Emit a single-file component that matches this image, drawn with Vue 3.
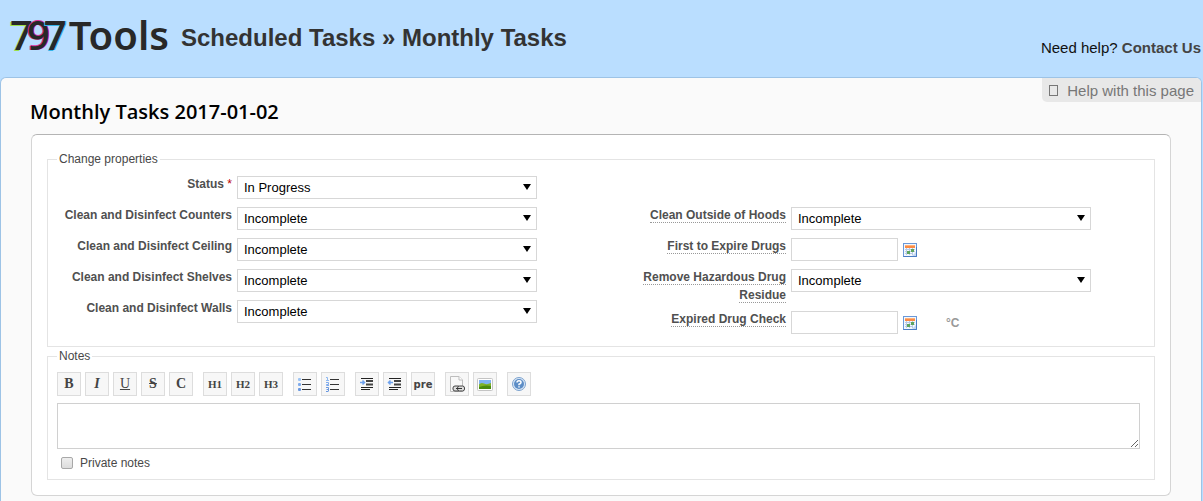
<script setup>
import { ref } from 'vue'

const choices = ['Incomplete', 'Complete', 'Not Applicable']

const status = ref('In Progress')
const leftFields = ref([
  { id: 'counters', label: 'Clean and Disinfect Counters', value: 'Incomplete' },
  { id: 'ceiling', label: 'Clean and Disinfect Ceiling', value: 'Incomplete' },
  { id: 'shelves', label: 'Clean and Disinfect Shelves', value: 'Incomplete' },
  { id: 'walls', label: 'Clean and Disinfect Walls', value: 'Incomplete' },
])
const rightFields = ref([
  { id: 'hoods', type: 'list', label: 'Clean Outside of Hoods', value: 'Incomplete' },
  { id: 'expire', type: 'date', label: 'First to Expire Drugs', value: '' },
  { id: 'residue', type: 'list', label: 'Remove Hazardous Drug Residue', value: 'Incomplete' },
  { id: 'check', type: 'date', label: 'Expired Drug Check', value: '', unit: '°C' },
])
const notes = ref('')
const isPrivate = ref(false)

const toolbar = [
  [
    { name: 'Strong', text: 'B', cls: 'strong' },
    { name: 'Italic', text: 'I', cls: 'italic' },
    { name: 'Underline', text: 'U', cls: 'underline' },
    { name: 'Deleted', text: 'S', cls: 'deleted' },
    { name: 'Inline code', text: 'C', cls: 'strong' },
  ],
  [
    { name: 'Heading 1', text: 'H1', cls: 'heading' },
    { name: 'Heading 2', text: 'H2', cls: 'heading' },
    { name: 'Heading 3', text: 'H3', cls: 'heading' },
  ],
  [
    { name: 'Unordered list', icon: 'ul' },
    { name: 'Ordered list', icon: 'ol' },
  ],
  [
    { name: 'Quote', icon: 'indent' },
    { name: 'Remove quote', icon: 'outdent' },
    { name: 'Preformatted text', text: 'pre', cls: 'pre' },
  ],
  [
    { name: 'Link to a page', icon: 'link' },
    { name: 'Image', icon: 'image' },
  ],
  [{ name: 'Text formatting help', icon: 'help' }],
]
</script>

<template>
  <div class="page">
    <header class="header">
      <div class="logo">
        <span class="digit green">7</span><span class="digit pink">9</span><span class="digit cyan">7</span>
        <span class="word">Tools</span>
      </div>
      <h1>Scheduled Tasks » Monthly Tasks</h1>
      <p class="contact">Need help? <a href="#contact">Contact Us</a></p>
    </header>

    <main class="main">
      <a class="page-help" href="#help">
        <svg width="9" height="11" aria-hidden="true"><rect x="0.5" y="0.5" width="8" height="10" fill="none" stroke="#777" /></svg>
        Help with this page
      </a>
      <h2>Monthly Tasks 2017-01-02</h2>

      <form class="card" @submit.prevent>
        <fieldset class="properties">
          <legend>Change properties</legend>
          <div class="columns">
            <div class="row">
              <label for="status">Status <span class="required">*</span></label>
              <div class="field">
                <span class="select">
                  <select id="status" v-model="status">
                    <option>New</option>
                    <option>In Progress</option>
                    <option>Closed</option>
                  </select>
                </span>
              </div>
            </div>
          </div>
          <div class="columns">
            <div class="column">
              <div v-for="f in leftFields" :key="f.id" class="row">
                <label :for="f.id">{{ f.label }}</label>
                <div class="field">
                  <span class="select">
                    <select :id="f.id" v-model="f.value">
                      <option v-for="c in choices" :key="c">{{ c }}</option>
                    </select>
                  </span>
                </div>
              </div>
            </div>
            <div class="column">
              <div v-for="f in rightFields" :key="f.id" class="row">
                <label :for="f.id"><span class="hint">{{ f.label }}</span></label>
                <div class="field">
                  <span v-if="f.type === 'list'" class="select">
                    <select :id="f.id" v-model="f.value">
                      <option v-for="c in choices" :key="c">{{ c }}</option>
                    </select>
                  </span>
                  <template v-else>
                    <input :id="f.id" v-model="f.value" class="date" type="text" />
                    <button class="calendar" type="button" :aria-label="'Pick date: ' + f.label">
                      <svg width="14" height="14" viewBox="0 0 14 14" aria-hidden="true">
                        <rect x="0.5" y="0.5" width="13" height="13" fill="#f4f8fd" stroke="#6a98d8" />
                        <path d="M0.5 13.5H13.5V4" fill="none" stroke="#4a7cc4" />
                        <rect x="2" y="2" width="10" height="3" fill="#fb8b45" />
                        <rect x="2" y="2" width="10" height="1" fill="#fdb27c" />
                        <path d="M2 6.5H12M2 8.5H12M2 10.5H10M3.5 5V12M6.5 5V12M9.5 5V12" stroke="#b9cbe6" fill="none" />
                        <rect x="8" y="6" width="3" height="3" fill="#5fa55f" />
                        <rect x="4" y="8" width="3" height="3" fill="#5fa55f" />
                        <path d="M13 9V13H9Z" fill="#c4d8f2" />
                      </svg>
                    </button>
                    <span v-if="f.unit" class="unit">{{ f.unit }}</span>
                  </template>
                </div>
              </div>
            </div>
          </div>
        </fieldset>

        <fieldset class="notes">
          <legend>Notes</legend>
          <div class="toolbar">
            <div v-for="(group, i) in toolbar" :key="i" class="group">
              <button v-for="b in group" :key="b.name" type="button" :title="b.name" :aria-label="b.name" :class="b.cls">
                <template v-if="b.text">{{ b.text }}</template>
                <svg v-else width="16" height="16" viewBox="0 0 16 16" aria-hidden="true">
                  <g v-if="b.icon === 'ul'">
                    <path d="M5 3.5H14M5 8.5H14M5 13.5H14" stroke="#333" />
                    <rect x="1" y="2" width="3" height="3" rx="1" fill="#9cc4f5" />
                    <rect x="1" y="7" width="3" height="3" rx="1" fill="#7fabec" />
                    <rect x="1" y="12" width="3" height="3" rx="1" fill="#6a98e0" />
                  </g>
                  <g v-else-if="b.icon === 'ol'" fill="none">
                    <path d="M5 3.5H14M5 8.5H14M5 13.5H14" stroke="#333" />
                    <path d="M1 1.5H2.5V4M1 4.5H4" stroke="#8db8f2" />
                    <path d="M1 6.5H3.5V8.5H1.5V9.5H4" stroke="#7fabec" />
                    <path d="M1 11.5H3.5V15M1.5 13.5H3M1 15.5H3.5" stroke="#6a98e0" />
                  </g>
                  <g v-else-if="b.icon === 'indent' || b.icon === 'outdent'" fill="none">
                    <path d="M2 2.5H14M2 11.5H14M2 13.5H11" stroke="#222" />
                    <path d="M7 5H14M7 8.5H14" stroke="#444" stroke-width="2" />
                    <path v-if="b.icon === 'indent'" d="M1 6.5H5M3.5 4.5L5.5 6.5L3.5 8.5" stroke="#6ea2ee" stroke-width="1.5" />
                    <path v-else d="M6 6.5H2M3.5 4.5L1.5 6.5L3.5 8.5" stroke="#6ea2ee" stroke-width="1.5" />
                  </g>
                  <g v-else-if="b.icon === 'link'">
                    <path d="M1.5 0.5H10L13.5 4V15.5H1.5Z" fill="#f8f8f8" stroke="#bdbdbd" />
                    <path d="M10 0.5V4H13.5" fill="#fff" stroke="#bdbdbd" />
                    <rect x="4" y="10" width="7" height="5" rx="2" fill="#ddd" stroke="#444" />
                    <rect x="8.5" y="10" width="7" height="5" rx="2" fill="#ddd" stroke="#444" />
                    <path d="M7 12.5H13" stroke="#333" />
                  </g>
                  <g v-else-if="b.icon === 'image'">
                    <rect x="0.5" y="2.5" width="15" height="12" rx="1" fill="#fff" stroke="#c4c4c4" />
                    <rect x="2" y="4" width="12" height="9" fill="#7fb2f2" />
                    <path d="M2 8.5Q4 6 7 7.5Q10 9 14 7V13H2Z" fill="#7fb228" />
                    <path d="M2 11Q8 8.5 14 10V13H2Z" fill="#4a8a10" />
                  </g>
                  <g v-else>
                    <circle cx="8" cy="8" r="6.5" fill="#dce8f6" stroke="#7ba2cf" />
                    <circle cx="8" cy="8" r="5" fill="#5c8dc6" />
                    <path d="M6 6.6Q6 4.8 8 4.8Q10 4.8 10 6.4Q10 7.4 8 8.2V9.2M8 10.2V11.6" fill="none" stroke="#fff" stroke-width="1.5" />
                  </g>
                </svg>
              </button>
            </div>
          </div>
          <textarea v-model="notes" aria-label="Notes"></textarea>
          <label class="private"><input v-model="isPrivate" type="checkbox" />Private notes</label>
        </fieldset>
      </form>
    </main>
  </div>
</template>

<style>
body {
  background: #badeff;
}
</style>

<style scoped>
.page {
  display: flex;
  flex-direction: column;
  min-height: 100vh;
  font-family: "Liberation Sans", Arial, sans-serif;
  font-size: 12px;
  color: #484848;
}
.page *,
.page {
  box-sizing: border-box;
}
.header {
  display: flex;
  align-items: flex-start;
  height: 77px;
  padding: 0 2px 0 10px;
}
.logo {
  display: flex;
  flex: none;
  margin-top: 7px;
  font-family: "Noto Sans", sans-serif;
  font-size: 40px;
  font-weight: 600;
  line-height: 56px;
  color: #282828;
}
.digit {
  font-family: "Open Sans", sans-serif;
}
.digit + .digit {
  margin-left: -6px;
}
.green {
  text-shadow: -1px 1px #9be04a;
}
.pink {
  text-shadow: -1px 0 #d8309c, 1px 0 #d8309c, 0 -1px #d8309c;
}
.cyan {
  text-shadow: 1px 0 #35b4e8, -1px 1px #35b4e8;
}
.word {
  margin-left: 2px;
}
h1 {
  flex: 1;
  margin: 24px 0 0 12px;
  font-size: 24px;
  line-height: 28px;
  color: #333;
}
.contact {
  margin: 38px 0 0;
  font-size: 15px;
  line-height: 20px;
  color: #111;
}
.contact a {
  font-weight: bold;
  color: #444;
  text-decoration: none;
}
.main {
  display: flex;
  flex: 1;
  flex-direction: column;
  margin-right: 1px;
  padding: 0 30px 5px;
  background: #fafafa;
  border: 1px solid #9dc3e6;
  border-bottom: 0;
  border-radius: 6px 6px 0 0;
}
.page-help {
  display: flex;
  align-items: center;
  align-self: flex-end;
  gap: 9px;
  height: 24px;
  margin-right: -30px;
  padding: 0 7px;
  font-size: 15px;
  color: #777;
  text-decoration: none;
  background: #e8e8e8;
  border-radius: 0 5px 0 5px;
}
h2 {
  margin: -3px 0 9px -1px;
  font-family: "Open Sans", sans-serif;
  font-size: 20px;
  font-weight: 600;
  line-height: 26px;
  color: #000;
}
.card {
  padding: 16px 15px 15px;
  background: #fff;
  border: 1px solid #d5d5d5;
  border-top-color: #b4b4b4;
  border-radius: 6px;
}
fieldset {
  min-width: 0;
  margin: 0;
  padding: 0;
  border: 1px solid #e4e4e4;
}
legend {
  padding: 0 2px;
  line-height: 16px;
}
.properties {
  padding: 8px 0 5px;
  margin-bottom: 1px;
}
.properties legend {
  margin-left: 9px;
}
.columns {
  display: grid;
  grid-template-columns: 1fr 1fr;
  column-gap: 2px;
}
.row {
  display: grid;
  grid-template-columns: 184px 1fr;
  column-gap: 5px;
  padding-bottom: 6px;
}
.row > label {
  padding-left: 10px;
  font-weight: bold;
  line-height: 18px;
  text-align: right;
  color: #505050;
}
.required {
  font-weight: normal;
  color: #bb0000;
}
.hint {
  border-bottom: 1px dotted #999;
}
.field {
  display: flex;
  align-items: center;
  align-self: start;
  padding: 1px 0;
}
.select {
  position: relative;
  flex: 0 1 300px;
}
.select::after {
  position: absolute;
  top: 8px;
  right: 6px;
  border: 4px solid transparent;
  border-top: 6px solid #000;
  border-bottom: 0;
  content: "";
  pointer-events: none;
}
select {
  display: block;
  width: 100%;
  height: 23px;
  padding: 0 6px;
  font: 13px "Liberation Sans", Arial, sans-serif;
  color: #000;
  appearance: none;
  background: #fff;
  border: 1px solid #d7d7d7;
  border-radius: 0;
}
.date {
  width: 107px;
  height: 23px;
  padding: 0 4px;
  font: 13px "Liberation Sans", Arial, sans-serif;
  border: 1px solid #d7d7d7;
}
.calendar {
  display: flex;
  margin-left: 5px;
  padding: 0;
  background: none;
  border: 0;
}
.unit {
  margin-left: 29px;
  font-weight: bold;
  color: #999;
}
.notes {
  padding: 8px 14px 8px 9px;
}
.toolbar {
  display: flex;
  gap: 10px;
  margin-bottom: 7px;
}
.group {
  display: flex;
  gap: 4px;
}
.group button {
  display: flex;
  align-items: center;
  justify-content: center;
  width: 24px;
  height: 24px;
  padding: 0;
  font: bold 14px "Liberation Serif", serif;
  color: #444;
  background: #f7f7f7;
  border: 1px solid #ddd;
}
.group .italic {
  font-style: italic;
}
.group .underline {
  font-weight: normal;
  text-decoration: underline;
}
.group .deleted {
  text-decoration: line-through;
}
.group .heading {
  font-size: 11px;
}
.group .pre {
  font: bold 10px "DejaVu Sans", sans-serif;
}
textarea {
  display: block;
  width: 100%;
  height: 46px;
  border: 1px solid #d0d0d0;
  resize: vertical;
}
.private {
  display: flex;
  align-items: center;
  gap: 7px;
  margin: 6px 0 0 4px;
  line-height: 16px;
}
.private input {
  width: 12px;
  height: 12px;
  margin: 0;
  appearance: none;
  background: linear-gradient(#eee, #dcdcdc);
  border: 1px solid #a8a8a8;
  border-radius: 2px;
}
.private input:checked {
  background: #555;
}
</style>
